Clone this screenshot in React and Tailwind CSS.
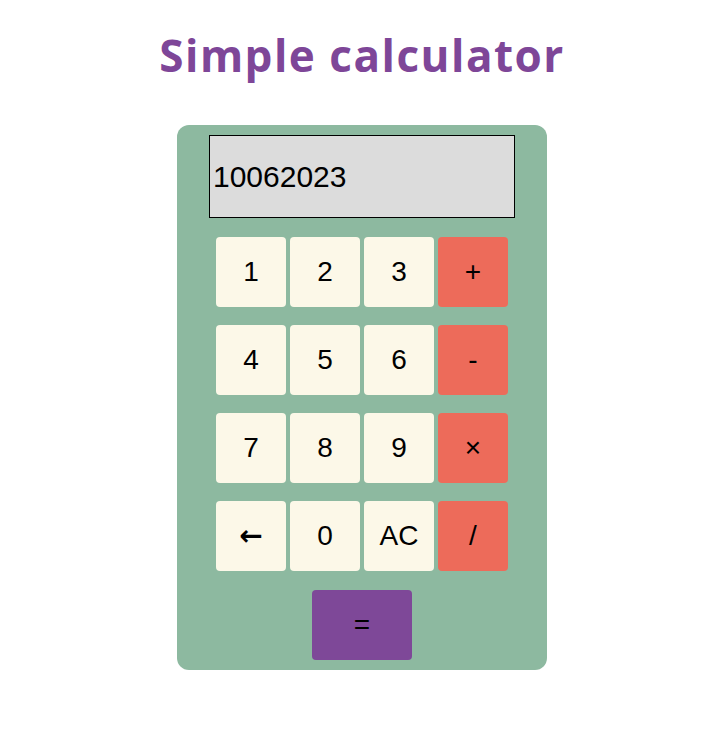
const rows = [
  ['1', '2', '3', '+'],
  ['4', '5', '6', '-'],
  ['7', '8', '9', '×'],
  ['←', '0', 'AC', '/'],
]

const ops = ['+', '-', '×', '/']

export default function App() {
  return (
    <div className="flex min-h-screen flex-col items-center bg-white pl-[20px]">
      <h1 className="mt-[23px] h-[64px] text-[44px] leading-[64px] font-bold text-[#7e4698] font-['Open_Sans',sans-serif] tracking-[1.5px]">
        Simple calculator
      </h1>

      <div className="mt-[38px] flex w-[370px] flex-col items-center rounded-xl bg-[#8db9a0] pt-[10px] pb-[10px]">
        <div className="flex h-[83px] w-[306px] items-center border border-black bg-[#dcdcdc] pl-[3px] text-[30px] text-black font-['Liberation_Sans',sans-serif]">
          10062023
        </div>

        <div className="mt-[19px] flex flex-col gap-[18px]">
          {rows.map((row, i) => (
            <div key={i} className="flex gap-[4px]">
              {row.map((key) => (
                <button
                  key={key}
                  className={`flex h-[70px] w-[70px] items-center justify-center rounded-[4px] text-[28px] text-black ${key === '←' ? "font-['DejaVu_Sans',sans-serif] font-bold" : "font-['Liberation_Sans',sans-serif]"} ${ops.includes(key) ? 'bg-[#ed6b5a]' : 'bg-[#fcf8e8]'}`}
                >
                  {key}
                </button>
              ))}
            </div>
          ))}
        </div>

        <button className="mt-[19px] flex h-[70px] w-[100px] items-center justify-center rounded-[4px] bg-[#7e4898] text-[28px] text-black font-['Liberation_Sans',sans-serif]">
          =
        </button>
      </div>
    </div>
  )
}
